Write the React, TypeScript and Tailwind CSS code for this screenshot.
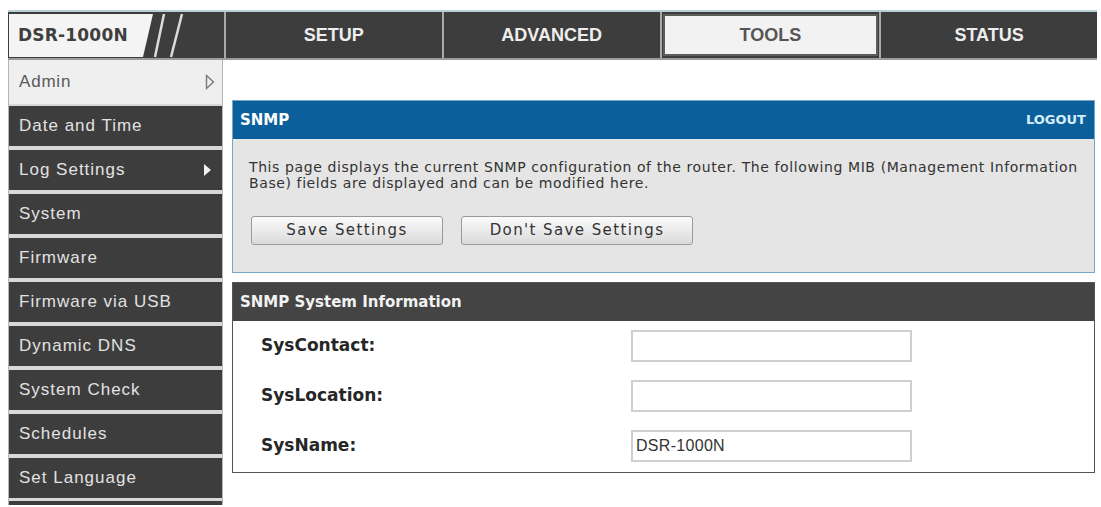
import React from 'react';

const tabs = ['SETUP', 'ADVANCED', 'TOOLS', 'STATUS'];

const menu = [
  'Date and Time',
  'Log Settings',
  'System',
  'Firmware',
  'Firmware via USB',
  'Dynamic DNS',
  'System Check',
  'Schedules',
  'Set Language',
];

const fields = [
  { label: 'SysContact:', value: '' },
  { label: 'SysLocation:', value: '' },
  { label: 'SysName:', value: 'DSR-1000N' },
];

const TopNav: React.FC = () => (
  <div className="w-[1089px] h-[50px] border-t-2 border-b-2 border-t-[#b7d0d5] border-b-[#9c9c9c] bg-[#3d3d3d] flex">
    {/* logo block with the slanted edge and the two slashes */}
    <div className="w-[216px] flex items-stretch">
      <div className="ml-[1px] mt-[2px] mb-[1px] w-[144px] bg-[#f4f4f4] flex items-center pl-[9px] [clip-path:polygon(0_0,100%_0,calc(100%-10px)_100%,0_100%)]">
        <span className="font-['DejaVu_Sans',sans-serif] font-bold text-[17px] text-[#3f3f3f] tracking-[0.2px]">DSR-1000N</span>
      </div>
      <svg width="40" height="46" viewBox="0 0 40 46" className="shrink-0">
        <line x1="11" y1="2" x2="2" y2="45" stroke="#dcdcdc" strokeWidth="2.5" />
        <line x1="29" y1="2" x2="18" y2="45" stroke="#dcdcdc" strokeWidth="2.5" />
      </svg>
    </div>
    {tabs.map((t) =>
      t === 'TOOLS' ? (
        <div key={t} className="flex-1 border-l-2 border-[#a9a9a9] py-[2px] px-[1px]">
          <div className="h-full bg-[#f2f2f2] border-2 border-[#5c5c5c] flex items-center justify-center">
            <span className="font-['Liberation_Sans',Arial,sans-serif] font-bold text-[18px] text-[#555]">{t}</span>
          </div>
        </div>
      ) : (
        <div key={t} className="flex-1 border-l-2 border-[#a9a9a9] flex items-center justify-center">
          <span className="font-['Liberation_Sans',Arial,sans-serif] font-bold text-[18px] text-[#eeeeee]">{t}</span>
        </div>
      )
    )}
  </div>
);

const Sidebar: React.FC = () => (
  <div className="w-[215px] border-x border-[#b5b5b5] bg-[#d8d8d8] flex flex-col font-['Liberation_Sans',Arial,sans-serif]">
    <div className="h-[44px] bg-[#efefef] flex items-center justify-between pl-[10px] pr-[7px]">
      <span className="text-[17px] tracking-[0.8px] text-[#595959]">Admin</span>
      <svg width="10" height="16" viewBox="0 0 10 16">
        <path d="M1.5 1.5 L8.5 8 L1.5 14.5 Z" fill="none" stroke="#7a7a7a" strokeWidth="1.4" />
      </svg>
    </div>
    <div className="flex flex-col gap-[4px] pt-[2px] pb-[3px]">
      {menu.map((m) => (
        <div key={m} className="h-[40px] bg-[#3d3d3d] flex items-center justify-between pl-[10px] pr-[11px]">
          <span className="text-[17px] tracking-[1px] text-[#e2e2e2]">{m}</span>
          {m === 'Log Settings' && (
            <svg width="7" height="12" viewBox="0 0 7 12">
              <path d="M0 0 L7 6 L0 12 Z" fill="#f0f0f0" />
            </svg>
          )}
        </div>
      ))}
    </div>
    <div className="h-[4px] bg-[#3d3d3d]" />
  </div>
);

const SnmpPanel: React.FC = () => (
  <div className="border border-[#78a6c6] font-['DejaVu_Sans',sans-serif]">
    <div className="h-[38px] bg-[#0b5f9b] flex items-center justify-between pl-[7px] pr-[8px]">
      <span className="font-bold text-[15px] text-white">SNMP</span>
      <span className="font-bold text-[13px] text-[#d6eef9]">LOGOUT</span>
    </div>
    <div className="bg-[#e5e5e5] pl-[16px] pr-[6px] pt-[20px] pb-[27px]">
      <p className="text-[14px] leading-[16px] tracking-[0.6px] text-[#333]">
        This page displays the current SNMP configuration of the router. The following MIB (Management Information Base) fields are displayed and can be modified here.
      </p>
      <div className="flex gap-[18px] mt-[25px] pl-[2px]">
        <button className="w-[192px] h-[29px] rounded-[3px] border border-[#9a9a9a] bg-gradient-to-b from-[#fbfbfb] to-[#dadada] text-[15px] tracking-[1.4px] text-[#333]">
          Save Settings
        </button>
        <button className="w-[232px] h-[29px] rounded-[3px] border border-[#9a9a9a] bg-gradient-to-b from-[#fbfbfb] to-[#dadada] text-[15px] tracking-[1.4px] text-[#333]">
          Don't Save Settings
        </button>
      </div>
    </div>
  </div>
);

const InfoPanel: React.FC = () => (
  <div className="mt-[9px] border border-[#555] font-['DejaVu_Sans',sans-serif]">
    <div className="h-[38px] bg-[#444] flex items-center pl-[7px]">
      <span className="font-bold text-[15px] text-[#f2f2f2]">SNMP System Information</span>
    </div>
    <div className="bg-white flex flex-col gap-[18px] pt-[9px] pb-[10px]">
      {fields.map((f) => (
        <div key={f.label} className="flex items-center pl-[28px]">
          <span className="w-[370px] font-bold text-[17px] text-[#262626]">{f.label}</span>
          <div className="w-[281px] h-[32px] border-2 border-[#cfcfcf] bg-white flex items-center pl-[3px]">
            <span className="font-['Liberation_Sans',Arial,sans-serif] text-[16px] tracking-[0.3px] text-[#333]">{f.value}</span>
          </div>
        </div>
      ))}
    </div>
  </div>
);

const App: React.FC = () => (
  <div className="w-[1101px] h-[507px] bg-white pt-[10px] pl-[8px] overflow-hidden">
    <TopNav />
    <div className="flex">
      <Sidebar />
      <div className="w-[872px] pl-[9px] pt-[40px]">
        <SnmpPanel />
        <InfoPanel />
      </div>
    </div>
  </div>
);

export default App;
